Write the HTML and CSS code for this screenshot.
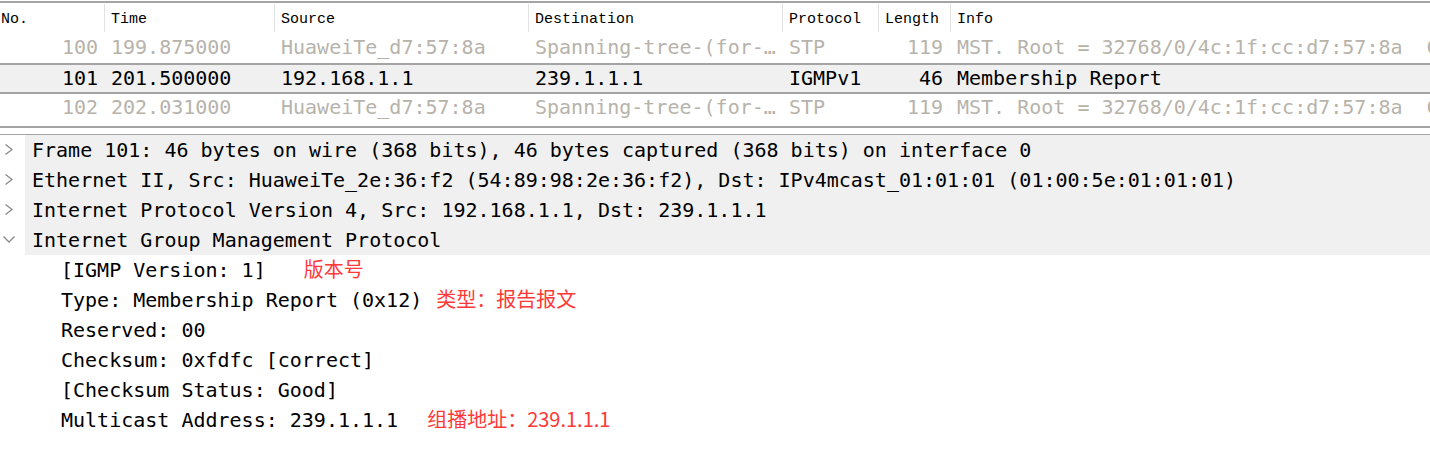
FILE: index.html
```html
<!DOCTYPE html>
<html>
<head>
<meta charset="utf-8">
<link rel="stylesheet" href="styles.css">
</head>
<body>
<div class="plist">
  <div class="phead">
    <div class="hc first">No.</div>
    <div class="hc">Time</div>
    <div class="hc">Source</div>
    <div class="hc">Destination</div>
    <div class="hc">Protocol</div>
    <div class="hc">Length</div>
    <div class="hc">Info</div>
  </div>
  <div class="prow dim r1">
    <div class="c num">100</div>
    <div class="c">199.875000</div>
    <div class="c">HuaweiTe_d7:57:8a</div>
    <div class="c">Spanning-tree-(for-…</div>
    <div class="c">STP</div>
    <div class="c len">119</div>
    <div class="c">MST. Root = 32768/0/4c:1f:cc:d7:57:8a  Cost = 0  Port = 0x8001</div>
  </div>
  <div class="prow sel">
    <div class="c num">101</div>
    <div class="c">201.500000</div>
    <div class="c">192.168.1.1</div>
    <div class="c">239.1.1.1</div>
    <div class="c">IGMPv1</div>
    <div class="c len">46</div>
    <div class="c">Membership Report</div>
  </div>
  <div class="prow dim r3">
    <div class="c num">102</div>
    <div class="c">202.031000</div>
    <div class="c">HuaweiTe_d7:57:8a</div>
    <div class="c">Spanning-tree-(for-…</div>
    <div class="c">STP</div>
    <div class="c len">119</div>
    <div class="c">MST. Root = 32768/0/4c:1f:cc:d7:57:8a  Cost = 0  Port = 0x8001</div>
  </div>
</div>

<div class="detail">
  <div class="trow">
    <span class="tw"><svg width="25" height="30" viewBox="0 0 25 30"><polyline points="5.5,9.5 12,14.5 5.5,19.5" class="chev"/></svg></span>
    <span class="tl">Frame 101: 46 bytes on wire (368 bits), 46 bytes captured (368 bits) on interface 0</span>
  </div>
  <div class="trow">
    <span class="tw"><svg width="25" height="30" viewBox="0 0 25 30"><polyline points="5.5,9.5 12,14.5 5.5,19.5" class="chev"/></svg></span>
    <span class="tl">Ethernet II, Src: HuaweiTe_2e:36:f2 (54:89:98:2e:36:f2), Dst: IPv4mcast_01:01:01 (01:00:5e:01:01:01)</span>
  </div>
  <div class="trow">
    <span class="tw"><svg width="25" height="30" viewBox="0 0 25 30"><polyline points="5.5,9.5 12,14.5 5.5,19.5" class="chev"/></svg></span>
    <span class="tl">Internet Protocol Version 4, Src: 192.168.1.1, Dst: 239.1.1.1</span>
  </div>
  <div class="trow">
    <span class="tw"><svg width="25" height="30" viewBox="0 0 25 30"><polyline points="3.5,11.5 9,17 14.5,11.5" class="chev"/></svg></span>
    <span class="tl">Internet Group Management Protocol</span>
  </div>
  <div class="child">[IGMP Version: 1]<span class="note n1">版本号</span></div>
  <div class="child">Type: Membership Report (0x12)<span class="note n2">类型：报告报文</span></div>
  <div class="child">Reserved: 00</div>
  <div class="child">Checksum: 0xfdfc [correct]</div>
  <div class="child">[Checksum Status: Good]</div>
  <div class="child">Multicast Address: 239.1.1.1<span class="note n3">组播地址：239.1.1.1</span></div>
</div>
</body>
</html>
```

FILE: styles.css
```css
html, body {
  margin: 0;
  padding: 0;
  background: #ffffff;
}
body {
  width: 1430px;
  height: 458px;
  overflow: hidden;
  font-family: "DejaVu Sans Mono", "Liberation Mono", monospace;
  font-size: 20px;
  color: #000;
}

.plist {
  margin-top: 1px;
  border-top: 2px solid #a4a4a4;
  border-bottom: 2px solid #a4a4a4;
  padding-bottom: 6px;
}

.phead,
.prow {
  display: grid;
  grid-template-columns: 104px 170px 254px 254px 96px 72px 1fr;
}

.phead {
  height: 30px;
  padding: 1px 0;
  box-sizing: border-box;
  font-family: "Liberation Mono", monospace;
  font-size: 15px;
  color: #000;
}
.hc {
  border-left: 1px solid #e2e2e2;
  padding-left: 6px;
  padding-top: 3px;
  line-height: 25px;
  white-space: pre;
  overflow: hidden;
}
.hc.first {
  border-left: none;
  padding-left: 1px;
}

.c {
  white-space: pre;
  overflow: hidden;
  padding-left: 7px;
}
.c.num,
.c.len {
  text-align: right;
  padding-left: 0;
}
.c.num { padding-right: 6px; }
.c.len { padding-right: 7px; }

.prow.dim {
  color: #b7b3ab;
}
.prow.r1 {
  height: 30px;
  line-height: 28px;
}
.prow.r3 {
  height: 26px;
  line-height: 26px;
}
.prow.sel {
  background: #f0f0f0;
  border-top: 2px solid #a4a4a4;
  border-bottom: 2px solid #a4a4a4;
  height: 27px;
  line-height: 27px;
}

.detail {
  margin-top: 6px;
  border-top: 1px solid #a4a4a4;
}

.trow {
  display: flex;
  height: 30px;
  line-height: 30px;
}
.tw {
  width: 25px;
  flex: none;
  display: block;
  background: #fff;
}
.tw svg {
  display: block;
}
.chev {
  fill: none;
  stroke: #8a8a8a;
  stroke-width: 1.3;
}
.tl {
  flex: 1;
  background: #f0f0f0;
  padding-left: 7px;
  white-space: pre;
  overflow: hidden;
}

.child {
  height: 30px;
  line-height: 30px;
  padding-left: 61px;
  white-space: pre;
}

.note {
  display: inline-block;
  background: #fff;
  color: #ff3838;
  font-family: "Noto Sans CJK SC", sans-serif;
  font-size: 20px;
  line-height: 28px;
  padding: 0 5px;
  vertical-align: top;
}
.n1 { margin-left: 33px; }
.n2 { margin-left: 9px; }
.n3 { margin-left: 24px; }
```
